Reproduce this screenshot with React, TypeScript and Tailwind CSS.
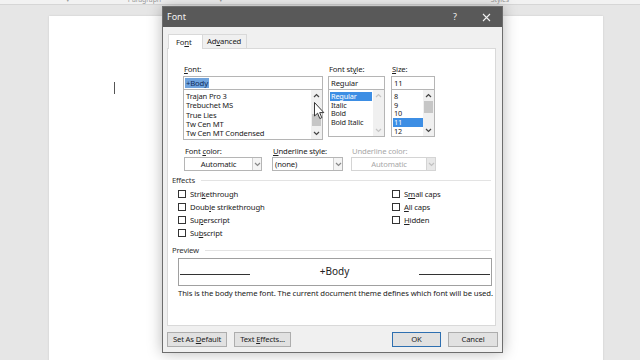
import React from "react";

const Chev = ({ up = false, color = "#444" }: { up?: boolean; color?: string }) => (
  <svg width="7" height="5" viewBox="0 0 7 5">
    <polyline
      points={up ? "1,4 3.5,1.5 6,4" : "1,1 3.5,3.5 6,1"}
      fill="none"
      stroke={color}
      strokeWidth="1.2"
    />
  </svg>
);

function Scrollbar({ thumb, faded }: { thumb?: string; faded?: boolean }) {
  const c = faded ? "#c4c4c4" : "#444";
  return (
    <div className="flex flex-col w-[11px] h-full bg-[#f0f0f0] shrink-0">
      <div className="h-[11px] flex items-center justify-center">
        <Chev up color={c} />
      </div>
      <div className="flex-1 flex flex-col">
        {thumb ? <div className={"mx-[1px] bg-[#c6c6c6] " + thumb} /> : null}
      </div>
      <div className="h-[11px] flex items-center justify-center">
        <Chev color={c} />
      </div>
    </div>
  );
}

function Select({ w, text, center, disabled }: { w: string; text: string; center?: boolean; disabled?: boolean }) {
  return (
    <div
      className={
        "flex h-[14px] border bg-white " +
        w +
        (disabled ? " border-[#d4d4d4] text-[#a8a8a8]" : " border-[#b5b5b5] text-[#222]")
      }
    >
      <div className={"flex-1 leading-[12px] " + (center ? "text-center" : "pl-[2px]")}>{text}</div>
      <div
        className={
          "w-[9px] flex items-center justify-center border-l " +
          (disabled ? "border-[#d4d4d4] bg-[#e8e8e8]" : "border-[#cfcfcf] bg-[#f4f4f4]")
        }
      >
        <Chev color={disabled ? "#c0c0c0" : "#888"} />
      </div>
    </div>
  );
}

function Check({ children }: { children: React.ReactNode }) {
  return (
    <div className="flex items-center h-[10px] gap-[4px]">
      <div className="w-[8px] h-[8px] border border-[#333] bg-white" />
      <div className="leading-[10px] text-[#222]">{children}</div>
    </div>
  );
}

function Btn({ w, children, ok }: { w: string; children: React.ReactNode; ok?: boolean }) {
  return (
    <div
      className={
        "h-[15px] flex items-center justify-center leading-[13px] bg-[#e1e1e1] text-[#222] " +
        w +
        (ok ? " border-[1.5px] border-[#2e6fb0]" : " border border-[#adadad]")
      }
    >
      <span>{children}</span>
    </div>
  );
}

export default function App() {
  return (
    <div className="relative w-[640px] h-[360px] overflow-hidden bg-[#e6e6e6] font-['Noto_Sans','Open_Sans',sans-serif] text-[7.7px] tracking-[-0.15px]">
      {/* ribbon remnant */}
      <div className="h-[5px] bg-[#f2f2f2] border-b border-[#d6d6d6] overflow-hidden relative">
        <div className="flex text-[7px] leading-[6px] -mt-[3px] text-[#9a9a9a]">
          <span className="ml-[66px]">▾</span>
          <span className="ml-[58px]">Paragraph</span>
          <span className="ml-[58px]">▾</span>
          <span className="ml-[268px]">Styles</span>
        </div>
      </div>
      {/* document page */}
      <div className="ml-[49px] mt-[11px] w-[554px] h-[350px] bg-white shadow-[0_0_2px_rgba(0,0,0,0.12)] pt-[66px] pl-[65px]">
        <div className="w-[1px] h-[12px] bg-[#555]" />
      </div>

      {/* Font dialog */}
      <div className="absolute left-[162px] top-[6px] w-[341px] h-[347px] flex flex-col bg-[#f0f0f0] border border-[#6d6d6d] shadow-[0_0_14px_rgba(0,0,0,0.28)]">
        <div className="h-[20px] shrink-0 bg-[#595959] text-[#f2f2f2] flex items-center text-[9px] tracking-normal">
          <span className="pl-[4px]">Font</span>
          <span className="ml-auto mr-[25px] text-[9px]">?</span>
          <svg width="9" height="9" viewBox="0 0 9 9" className="mr-[11px]">
            <path d="M1 1 L8 8 M8 1 L1 8" stroke="#f2f2f2" strokeWidth="1.1" />
          </svg>
        </div>

        <div className="flex flex-col px-[4px] pt-[6px]">
          {/* tabs */}
          <div className="flex items-end h-[15px]">
            <div className="ml-[1px] w-[35px] h-[15px] bg-white border border-b-0 border-[#d9d9d9] pl-[7px] leading-[14px] text-[#222] relative z-10 -mb-px">
              Fo<u>n</u>t
            </div>
            <div className="w-[44px] h-[14px] bg-[#f0f0f0] border border-b-0 border-l-0 border-[#d9d9d9] pl-[4px] leading-[13px] text-[#222]">
              Ad<u>v</u>anced
            </div>
          </div>

          {/* panel */}
          <div className="h-[278px] w-[329px] bg-white border border-[#d9d9d9] flex flex-col">
            {/* row 1 */}
            <div className="flex ml-[15px] mt-[15px]">
              <div className="flex flex-col w-[140px]">
                <div className="h-[10px] leading-[10px] mb-[2px] pl-[1px] text-[#222]">
                  <u>F</u>ont:
                </div>
                <div className="h-[14px] border border-[#b5b5b5] px-[1px] flex items-center">
                  <span className="bg-[#6fa3dd] text-[#0f2d5c] leading-[10px] px-[1px]">+Body</span>
                </div>
                <div className="h-[50px] border border-t-0 border-[#b5b5b5] flex">
                  <div className="flex-1 flex flex-col pl-[2px] pt-[2px] leading-[9.3px] text-[#222] text-[7.6px]">
                    <div>Trajan Pro 3</div>
                    <div>Trebuchet MS</div>
                    <div>True Lies</div>
                    <div>Tw Cen MT</div>
                    <div>Tw Cen MT Condensed</div>
                  </div>
                  <Scrollbar thumb="mt-[13px] h-[12px]" />
                </div>
              </div>
              <div className="flex flex-col w-[57px] ml-[5px]">
                <div className="h-[10px] leading-[10px] mb-[2px] pl-[1px] text-[#222]">
                  Font st<u>y</u>le:
                </div>
                <div className="h-[14px] border border-[#b5b5b5] pl-[2px] leading-[12px] text-[#222]">Regular</div>
                <div className="h-[47px] border border-t-0 border-[#b5b5b5] flex">
                  <div className="flex-1 flex flex-col pl-[1px] pt-[2px] leading-[8.7px] text-[#222] text-[7.3px]">
                    <div className="bg-[#3d8ee4] text-white pl-[1px] mr-[1px]">Regular</div>
                    <div className="pl-[1px]">Italic</div>
                    <div className="pl-[1px]">Bold</div>
                    <div className="pl-[1px]">Bold Italic</div>
                  </div>
                  <Scrollbar faded />
                </div>
              </div>
              <div className="flex flex-col w-[44px] ml-[6px]">
                <div className="h-[10px] leading-[10px] mb-[2px] pl-[1px] text-[#222]">
                  <u>S</u>ize:
                </div>
                <div className="h-[14px] border border-[#b5b5b5] pl-[2px] leading-[12px] text-[#222]">11</div>
                <div className="h-[47px] border border-t-0 border-[#b5b5b5] flex">
                  <div className="flex-1 flex flex-col pl-[1px] pt-[2px] leading-[8.7px] text-[#222] text-[7.3px]">
                    <div className="pl-[1px]">8</div>
                    <div className="pl-[1px]">9</div>
                    <div className="pl-[1px]">10</div>
                    <div className="bg-[#3d8ee4] text-white pl-[1px]">11</div>
                    <div className="pl-[1px]">12</div>
                  </div>
                  <Scrollbar thumb="h-[12px]" />
                </div>
              </div>
            </div>

            {/* row 2 */}
            <div className="flex ml-[16px] mt-[6px]">
              <div className="flex flex-col">
                <div className="h-[10px] leading-[10px] mb-[1px] pl-[1px] text-[#222]">
                  Font <u>c</u>olor:
                </div>
                <Select w="w-[78px]" text="Automatic" center />
              </div>
              <div className="flex flex-col ml-[10px]">
                <div className="h-[10px] leading-[10px] mb-[1px] pl-[1px] text-[#222]">
                  <u>U</u>nderline style:
                </div>
                <Select w="w-[71px]" text="(none)" />
              </div>
              <div className="flex flex-col ml-[8px]">
                <div className="h-[10px] leading-[10px] mb-[1px] pl-[1px] text-[#a8a8a8]">Underline color:</div>
                <Select w="w-[85px]" text="Automatic" center disabled />
              </div>
            </div>

            {/* effects */}
            <div className="flex items-center ml-[4px] mr-[4px] mt-[4px] h-[10px]">
              <span className="leading-[10px] text-[#333]">Effects</span>
              <div className="flex-1 ml-[6px] h-px bg-[#e3e3e3]" />
            </div>
            <div className="flex ml-[10px] mt-[4px]">
              <div className="flex flex-col gap-[3px] w-[214px]">
                <Check>
                  Stri<u>k</u>ethrough
                </Check>
                <Check>
                  Doub<u>l</u>e strikethrough
                </Check>
                <Check>
                  Su<u>p</u>erscript
                </Check>
                <Check>
                  Su<u>b</u>script
                </Check>
              </div>
              <div className="flex flex-col gap-[3px]">
                <Check>
                  S<u>m</u>all caps
                </Check>
                <Check>
                  <u>A</u>ll caps
                </Check>
                <Check>
                  <u>H</u>idden
                </Check>
              </div>
            </div>

            {/* preview */}
            <div className="flex items-center ml-[4px] mr-[4px] mt-[7px] h-[10px]">
              <span className="leading-[10px] text-[#333]">Preview</span>
              <div className="flex-1 ml-[6px] h-px bg-[#e3e3e3]" />
            </div>
            <div className="ml-[10px] mt-[3px] w-[314px] h-[28px] border border-[#a0a0a0] flex items-center px-[1px]">
              <div className="w-[70px] h-px bg-[#333] mt-[4px]" />
              <div className="flex-1 text-center text-[10px] text-[#222] -mt-[1px] tracking-normal">+Body</div>
              <div className="w-[71px] h-px bg-[#333] mt-[4px]" />
            </div>
            <div className="ml-[10px] mt-[2px] h-[10px] leading-[10px] text-[#222] whitespace-nowrap tracking-[-0.1px]">
              This is the body theme font. The current document theme defines which font will be used.
            </div>
          </div>

          {/* buttons */}
          <div className="flex mt-[6px]">
            <Btn w="w-[60px]">
              Set As <u>D</u>efault
            </Btn>
            <div className="ml-[7px]">
              <Btn w="w-[57px]">
                Text <u>E</u>ffects...
              </Btn>
            </div>
            <div className="ml-auto">
              <Btn w="w-[49px]" ok>
                OK
              </Btn>
            </div>
            <div className="ml-[7px]">
              <Btn w="w-[50px]">Cancel</Btn>
            </div>
          </div>
        </div>
      </div>

      {/* mouse pointer */}
      <svg className="absolute left-[314px] top-[102px]" width="11" height="18" viewBox="0 0 11 18">
        <path
          d="M0.5 0.5 L0.5 14 L3.6 11.2 L5.8 16.5 L7.8 15.7 L5.7 10.6 L9.8 10.6 Z"
          fill="white"
          stroke="#222"
          strokeWidth="0.9"
          strokeLinejoin="round"
        />
      </svg>
    </div>
  );
}
